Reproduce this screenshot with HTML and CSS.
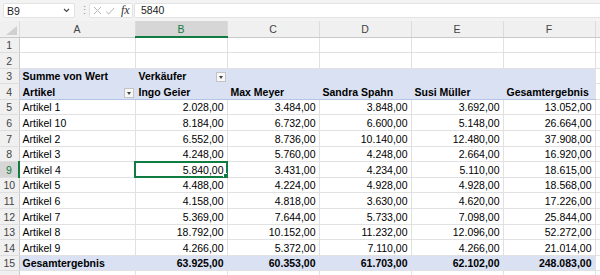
FILE: index.html
```html
<!DOCTYPE html>
<html lang="de">
<head>
    <meta charset="UTF-8">
    <title>Pivot Verkäufer</title>
    <link rel="stylesheet" href="styles.css">
</head>
<body>
    <div class="fbar">
        <div class="namebox">
            <span>B9</span>
            <svg class="chev" width="7" height="5" viewBox="0 0 7 5"><path d="M1 1 L3.5 3.5 L6 1" fill="none" stroke="#444" stroke-width="1.1"/></svg>
        </div>
        <span class="dots">⋮</span>
        <div class="fxbox">
            <svg width="9" height="9" viewBox="0 0 9 9"><path d="M1 1 L8 8 M8 1 L1 8" stroke="#b8b8b8" stroke-width="1"/></svg>
            <svg width="10" height="8" viewBox="0 0 10 8"><path d="M1 4.5 L3.8 7 L9 1" fill="none" stroke="#b8b8b8" stroke-width="1"/></svg>
            <span class="fx">fx</span>
        </div>
        <div class="formula">5840</div>
    </div>

    <table class="sheet">
        <colgroup>
            <col style="width:19px">
            <col style="width:116px">
            <col style="width:92px">
            <col style="width:92px">
            <col style="width:92px">
            <col style="width:92px">
            <col style="width:92px">
            <col style="width:5px">
        </colgroup>
        <thead>
            <tr>
                <th class="corner"><span class="tri"></span></th>
                <th>A</th>
                <th class="hsel">B</th>
                <th>C</th>
                <th>D</th>
                <th>E</th>
                <th>F</th>
                <th></th>
            </tr>
        </thead>
        <tbody id="rows">
            <tr><th>1</th><td></td><td></td><td></td><td></td><td></td><td></td><td></td></tr>
            <tr><th>2</th><td></td><td></td><td></td><td></td><td></td><td></td><td></td></tr>
            <tr class="pv">
                <th>3</th>
                <td class="b">Summe von Wert</td>
                <td class="b drop">Verkäufer<span class="filter"></span></td>
                <td></td><td></td><td></td><td class="last"></td>
                <td class="out"></td>
            </tr>
            <tr class="pv pvhead">
                <th>4</th>
                <td class="b drop">Artikel<span class="filter"></span></td>
                <td class="b">Ingo Geier</td>
                <td class="b">Max Meyer</td>
                <td class="b">Sandra Spahn</td>
                <td class="b">Susi Müller</td>
                <td class="b last">Gesamtergebnis</td>
                <td class="out"></td>
            </tr>
        </tbody>
    </table>

    <script>
        const data = [
            ['Artikel 1', '2.028,00', '3.484,00', '3.848,00', '3.692,00', '13.052,00'],
            ['Artikel 10', '8.184,00', '6.732,00', '6.600,00', '5.148,00', '26.664,00'],
            ['Artikel 2', '6.552,00', '8.736,00', '10.140,00', '12.480,00', '37.908,00'],
            ['Artikel 3', '4.248,00', '5.760,00', '4.248,00', '2.664,00', '16.920,00'],
            ['Artikel 4', '5.840,00', '3.431,00', '4.234,00', '5.110,00', '18.615,00'],
            ['Artikel 5', '4.488,00', '4.224,00', '4.928,00', '4.928,00', '18.568,00'],
            ['Artikel 6', '4.158,00', '4.818,00', '3.630,00', '4.620,00', '17.226,00'],
            ['Artikel 7', '5.369,00', '7.644,00', '5.733,00', '7.098,00', '25.844,00'],
            ['Artikel 8', '18.792,00', '10.152,00', '11.232,00', '12.096,00', '52.272,00'],
            ['Artikel 9', '4.266,00', '5.372,00', '7.110,00', '4.266,00', '21.014,00']
        ];
        const total = ['Gesamtergebnis', '63.925,00', '60.353,00', '61.703,00', '62.102,00', '248.083,00'];
        const body = document.getElementById('rows');

        function addRow(num, cells, cls) {
            const tr = document.createElement('tr');
            if (cls) tr.className = cls;
            const th = document.createElement('th');
            th.textContent = num;
            if (num === 9) th.className = 'rsel';
            tr.appendChild(th);
            cells.forEach((val, i) => {
                const td = document.createElement('td');
                td.textContent = val;
                if (i > 0) td.classList.add('num');
                if (cls) td.classList.add('b');
                if (i === 5) td.classList.add('last');
                if (num === 9 && i === 1) td.classList.add('active');
                tr.appendChild(td);
            });
            const out = document.createElement('td');
            if (cls) out.className = 'out';
            tr.appendChild(out);
            body.appendChild(tr);
        }

        data.forEach((row, i) => addRow(i + 5, row));
        addRow(15, total, 'pv pvtotal');
        // row 16 is cut by the window edge, only its grid shows
        addRow('', ['', '', '', '', '', '']);
    </script>
</body>
</html>
```

FILE: styles.css
```css
* {
    margin: 0;
    padding: 0;
    box-sizing: border-box;
}
body {
    font-family: "Liberation Sans", Arial, sans-serif;
    font-size: 10.5px;
    color: #000;
    background: #fff;
    overflow: hidden;
}
.fbar {
    height: 21px;
    background: #f3f3f3;
    display: flex;
    align-items: center;
    padding: 0 0 0 3px;
    gap: 4px;
}
.namebox {
    width: 72px;
    height: 15px;
    background: #fff;
    border: 1px solid #e3e3e3;
    border-radius: 2px;
    display: flex;
    align-items: center;
    justify-content: space-between;
    padding: 0 4px 0 3px;
    color: #222;
}
.dots {
    color: #999;
    font-size: 11px;
    width: 6px;
    text-align: center;
}
.fxbox {
    width: 44px;
    height: 15px;
    background: #fff;
    border: 1px solid #e3e3e3;
    border-radius: 2px;
    display: flex;
    align-items: center;
    gap: 3px;
    padding-left: 3px;
}
.fx {
    font-family: "Liberation Serif", serif;
    font-style: italic;
    font-size: 12px;
    color: #333;
    margin-left: 3px;
}
.formula {
    flex: 1;
    height: 15px;
    background: #fff;
    border: 1px solid #e3e3e3;
    border-right: none;
    border-radius: 2px 0 0 2px;
    padding-left: 6px;
    line-height: 13px;
    color: #222;
    margin-left: -3px;
}
.sheet {
    border-collapse: collapse;
    table-layout: fixed;
    width: 600px;
}
.sheet thead th {
    height: 16px;
    background: #f0f0f0;
    border-right: 1px solid #dcdcdc;
    border-bottom: 1px solid #c9c9c9;
    font-weight: normal;
    color: #444;
    font-size: 10.5px;
    padding-top: 1px;
}
.sheet thead th.hsel {
    background: #d6d6d6;
    color: #107c41;
    border-bottom: 2px solid #107c41;
}
.corner {
    position: relative;
}
.tri {
    position: absolute;
    right: 2px;
    bottom: 2px;
    width: 0;
    height: 0;
    border-left: 11px solid transparent;
    border-bottom: 9px solid #d0d0d0;
}
.sheet tbody tr {
    height: 15.6px;
}
.sheet tbody th {
    background: #f0f0f0;
    border-right: 1px solid #c9c9c9;
    border-bottom: 1px solid #dedede;
    font-weight: normal;
    color: #444;
    text-align: center;
    vertical-align: bottom;
    padding-bottom: 1px;
    line-height: 12px;
}
.sheet tbody th.rsel {
    background: #d6d6d6;
    color: #107c41;
    border-right: 2px solid #107c41;
}
.sheet td {
    border-right: 1px solid #e1e1e1;
    border-bottom: 1px solid #e1e1e1;
    vertical-align: bottom;
    padding: 0 3px 1px 3px;
    line-height: 12px;
    white-space: nowrap;
    overflow: hidden;
}
.sheet td.num {
    text-align: right;
}
.sheet td.b {
    font-weight: bold;
}
.pv td {
    background: #d9e1f2;
    border-right-color: #d9e1f2;
    border-bottom-color: #d9e1f2;
}
.pv td.last {
    border-right-color: #e1e1e1;
}
.pv td.out {
    background: #fff;
    border-right-color: #e1e1e1;
    border-bottom-color: #e1e1e1;
}
.pvhead td {
    border-bottom-color: #b4c6e7;
}
.pvhead td.out {
    border-bottom-color: #e1e1e1;
}
.pvtotal td {
    border-top: 1px solid #b4c6e7;
    border-bottom-color: #e1e1e1;
}
.pvtotal td.out {
    border-top-color: #e1e1e1;
}
.drop {
    position: relative;
}
.filter {
    position: absolute;
    right: 1px;
    bottom: 1px;
    width: 10px;
    height: 10px;
    background: #f7f7f7;
    border: 1px solid #c3c3c3;
}
.filter::after {
    content: "";
    position: absolute;
    left: 2px;
    top: 3px;
    border-left: 2.5px solid transparent;
    border-right: 2.5px solid transparent;
    border-top: 3px solid #444;
}
.sheet td.active {
    position: relative;
    outline: 2px solid #107c41;
    outline-offset: -1px;
}
.sheet td.active::after {
    content: "";
    position: absolute;
    right: -3px;
    bottom: -3px;
    width: 5px;
    height: 5px;
    background: #107c41;
    border: 1px solid #fff;
}
```
